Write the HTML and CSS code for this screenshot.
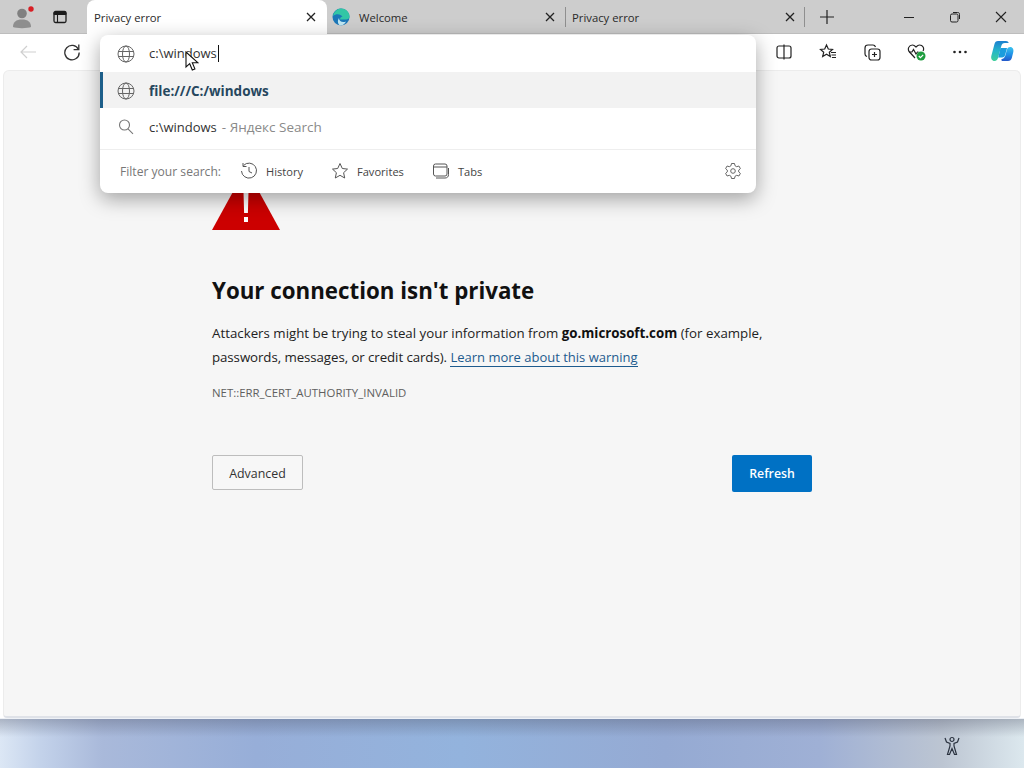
FILE: index.html
```html
<!DOCTYPE html>
<html lang="en">
<head>
    <meta charset="UTF-8">
    <title>Privacy error</title>
    <link rel="stylesheet" href="styles.css">
</head>
<body>
    <div class="browser">
        <!-- Tab strip -->
        <div class="tabstrip">
            <div class="profile">
                <svg width="24" height="24" viewBox="0 0 24 24"><circle cx="12" cy="8.500" r="4.800" fill="#808080"/><path d="M3 22c0-5 3-7.500 9-7.500s9 2.500 9 7.500c-3 1.500-15 1.500-18 0z" fill="#8e8e8e"/><circle cx="21" cy="4" r="2.700" fill="#d81e24"/></svg>
            </div>
            <div class="tab-actions">
                <svg width="16" height="16" viewBox="0 0 16 16" fill="none" stroke="#1c1c1c"><rect x="2" y="2.500" width="12" height="11" rx="1.500" stroke-width="1.300"/><path d="M2 3.500h12v2H2z" fill="#1c1c1c"/><path d="M5.500 5v8" stroke-width="1.100"/></svg>
            </div>
            <div class="tab tab-active">
                <span class="tab-title">Privacy error</span>
                <svg class="tab-close" width="10" height="10" viewBox="0 0 10 10"><path d="M1 1l8 8M9 1l-8 8" stroke="#222" stroke-width="1.300"/></svg>
            </div>
            <div class="tab tab-welcome">
                <svg class="tab-icon" width="18" height="18" viewBox="0 0 18 18"><circle cx="9" cy="9" r="8.500" fill="#1b76b8"/><path d="M1 8c1-5 5-7.500 8-7.500 4.500 0 8.500 3.500 8.500 8 0 2-1.500 3-3.500 3H8c0-1 .5-2.500 2.500-3C9 6 4 5 1 8z" fill="#33c6a5"/><path d="M7 10c0 3.500 3.500 5 7 3.500-1 2-3 4-5.500 4C6 17 5 13 7 10z" fill="#bfe6f2"/></svg>
                <span class="tab-title">Welcome</span>
                <svg class="tab-close" width="10" height="10" viewBox="0 0 10 10"><path d="M1 1l8 8M9 1l-8 8" stroke="#222" stroke-width="1.300"/></svg>
            </div>
            <div class="tab tab-last">
                <span class="tab-title">Privacy error</span>
                <svg class="tab-close" width="10" height="10" viewBox="0 0 10 10"><path d="M1 1l8 8M9 1l-8 8" stroke="#222" stroke-width="1.300"/></svg>
            </div>
            <div class="new-tab">
                <svg width="16" height="16" viewBox="0 0 16 16"><path d="M8 1v14M1 8h14" stroke="#222" stroke-width="1.200"/></svg>
            </div>
            <div class="window-controls">
                <svg width="12" height="12" viewBox="0 0 12 12"><path d="M1 6.500h10" stroke="#222"/></svg>
                <svg width="12" height="12" viewBox="0 0 12 12" fill="none" stroke="#222"><rect x="1.500" y="3" width="7.500" height="8" rx="1.500"/><path d="M4 1.500h4.500c1.500 0 2 .5 2 2V8"/></svg>
                <svg width="12" height="12" viewBox="0 0 12 12"><path d="M1 1l10 10M11 1L1 11" stroke="#222" stroke-width="1.100"/></svg>
            </div>
        </div>

        <!-- Toolbar -->
        <div class="toolbar">
            <div class="nav">
                <svg width="18" height="18" viewBox="0 0 18 18" fill="none" stroke="#cfcfcf" stroke-width="1.200"><path d="M17 9H2M8 3L2 9l6 6"/></svg>
                <svg width="18" height="18" viewBox="0 0 18 18" fill="none" stroke="#333" stroke-width="1.300"><path d="M15.500 6.500A7.200 7.200 0 1 0 16.200 9.500"/><path d="M15.800 1.500v5.200h-5.200"/></svg>
            </div>
            <div class="tools">
                <svg width="18" height="18" viewBox="0 0 18 18" fill="none" stroke="#222" stroke-width="1.200"><rect x="2" y="3" width="14" height="12" rx="2"/><path d="M9 1.500v15"/></svg>
                <svg width="18" height="18" viewBox="0 0 18 18" fill="none" stroke="#222" stroke-width="1.200"><path d="M7.500 2l1.800 4 4.200.4-3.200 2.900 1 4.200-3.800-2.300-3.800 2.300 1-4.200L1.500 6.400l4.200-.4z"/><path d="M12 9.500h5M12.500 12h4.500M13 14.500h4"/></svg>
                <svg width="18" height="18" viewBox="0 0 18 18" fill="none" stroke="#222" stroke-width="1.200"><rect x="6" y="6" width="11" height="11" rx="2.500"/><path d="M11.500 9v5M9 11.500h5M4 13.500C2.500 13 2 12 2 11V5c0-2 1-3 3-3h5c1 0 2 .5 2.500 2"/></svg>
                <svg class="tool-health" width="20" height="18" viewBox="0 0 20 18" fill="none" stroke="#222" stroke-width="1.200"><path d="M8 15L2.500 9C0 6 2 2 5.500 2 7 2 8 3 9 4c1-1 2-2 3.500-2C16 2 17.500 5.500 16 8"/><path d="M2 9h3l1.500-2.500L9 11l1.500-2h1"/><circle cx="14" cy="13" r="4.500" fill="#1f9d3f" stroke="none"/><path d="M11.800 13l1.600 1.600 2.800-2.800" stroke="#fff"/></svg>
                <svg width="18" height="18" viewBox="0 0 18 18" fill="#222"><circle cx="3.500" cy="9" r="1.300"/><circle cx="9" cy="9" r="1.300"/><circle cx="14.500" cy="9" r="1.300"/></svg>
                <svg class="tool-copilot" width="26" height="26" viewBox="0 0 26 26">
                    <defs>
                        <linearGradient id="copilot-left" x1="0" y1="0" x2="0" y2="1"><stop offset="0" stop-color="#1c7fd0"/><stop offset=".5" stop-color="#25b6c9"/><stop offset="1" stop-color="#3fcf9a"/></linearGradient>
                        <linearGradient id="copilot-right" x1="0" y1="0" x2="0" y2="1"><stop offset="0" stop-color="#3cc4ee"/><stop offset=".55" stop-color="#1f8fe6"/><stop offset="1" stop-color="#2457c9"/></linearGradient>
                    </defs>
                    <path d="M9 2h8c1.500 0 2.300.8 2.800 2l-4 0c-2 0-3 1-3.500 3L9 19c-.4 1.500-1.500 3-3.500 3C3 22 1.700 19.500 2.300 17L5.500 5C6 3 7 2 9 2z" fill="url(#copilot-left)"/>
                    <path d="M13 22h6c2 0 3.200-1 3.800-3l1.500-6c.6-2.500-.6-5-3-5-2 0-3 1.200-3.500 3l-1.300 5c-.5 1.800-1.500 3.500-3.500 4-.8.200-1 1-.0 2z" fill="url(#copilot-right)"/>
                    <path d="M11.500 9h6.500l-1.800 7c-.5 1.500-1.500 2.500-3.200 2.500H9.200z" fill="#1b9ddd"/>
                </svg>
            </div>
        </div>

        <!-- Error page -->
        <div class="page">
            <div class="interstitial">
                <svg class="warning" width="68" height="62" viewBox="0 0 68 62"><path d="M34 0l34 62H0z" fill="#cc0000"/><path d="M31.500 24h5l-.6 21h-3.800zM32 49h4v5h-4z" fill="#fff"/></svg>
                <h1>Your connection isn't private</h1>
                <p class="message">Attackers might be trying to steal your information from <strong>go.microsoft.com</strong> (for example, <span class="message-tail">passwords, messages, or credit cards).</span> <a href="#">Learn more about this warning</a></p>
                <p class="error-code">NET::ERR_CERT_AUTHORITY_INVALID</p>
                <div class="buttons">
                    <button class="btn-advanced">Advanced</button>
                    <button class="btn-refresh">Refresh</button>
                </div>
            </div>
        </div>

        <!-- Desktop below the window -->
        <div class="desktop">
            <svg width="18" height="20" viewBox="0 0 18 20" fill="none" stroke="#2b3340" stroke-width="1.200"><circle cx="9" cy="3.500" r="2"/><path d="M2 2l1.500 4L7 7.500V10L4.500 18.500H6.500L9 12.500l2.500 6h2L11 10V7.500L14.500 6 16 2"/></svg>
        </div>
    </div>

    <!-- Address bar dropdown -->
    <div class="omnibox">
        <div class="omni-input">
            <svg class="globe" width="18" height="18" viewBox="0 0 18 18" fill="none" stroke="#666" stroke-width="1"><circle cx="9" cy="9" r="8"/><ellipse cx="9" cy="9" rx="3.500" ry="8"/><path d="M1.500 6.500h15M1.500 11.500h15"/></svg>
            <span class="typed">c:\windows</span>
        </div>
        <div class="omni-row omni-selected">
            <svg class="globe" width="18" height="18" viewBox="0 0 18 18" fill="none" stroke="#666" stroke-width="1"><circle cx="9" cy="9" r="8"/><ellipse cx="9" cy="9" rx="3.500" ry="8"/><path d="M1.500 6.500h15M1.500 11.500h15"/></svg>
            <span class="omni-url">file:///C:/windows</span>
        </div>
        <div class="omni-row">
            <svg class="globe" width="18" height="18" viewBox="0 0 18 18" fill="none" stroke="#777" stroke-width="1.100"><circle cx="7.500" cy="7" r="5"/><path d="M11 10.800l5 5"/></svg>
            <span class="omni-query">c:\windows</span>
            <span class="omni-engine">- Яндекс Search</span>
        </div>
        <div class="omni-filter">
            <span class="filter-label">Filter your search:</span>
            <span class="filter-item">
                <svg width="18" height="18" viewBox="0 0 18 18" fill="none" stroke="#555"><path d="M3.500 3.500A7.500 7.500 0 1 1 1.500 9"/><path d="M3 1v3.500h3.500M9 5v4.500l3 1.500"/></svg>
                History
            </span>
            <span class="filter-item">
                <svg width="18" height="18" viewBox="0 0 18 18" fill="none" stroke="#555"><path d="M9 1.500l2.300 5 5.200.6-3.900 3.600 1.100 5.300L9 13.300 4.300 16l1.100-5.300L1.500 7.100l5.200-.6z"/></svg>
                Favorites
            </span>
            <span class="filter-item">
                <svg width="18" height="18" viewBox="0 0 18 18" fill="none" stroke="#555"><rect x="1.500" y="2" width="13.500" height="12" rx="2"/><path d="M1.500 5h13.500M4 16h9c2 0 3.500-1 3.500-3.500V6"/></svg>
                Tabs
            </span>
            <svg class="filter-gear" width="18" height="18" viewBox="0 0 18 18" fill="none" stroke="#666"><path d="M7.500 1.500h3l.5 2.200 1.700 1 2.200-.7 1.500 2.600-1.700 1.500v1.800l1.700 1.500-1.500 2.600-2.200-.7-1.700 1-.5 2.200h-3l-.5-2.200-1.700-1-2.200.7-1.500-2.600 1.700-1.500V8.100L1.600 6.600 3.100 4l2.200.7 1.700-1z"/><circle cx="9" cy="9" r="2.300"/></svg>
        </div>
    </div>

    <!-- Mouse pointer -->
    <svg class="pointer" width="14" height="21" viewBox="0 0 14 21"><path d="M1 1v15l3.700-3.300 2.600 6.300 2.600-1.100-2.600-6.100H13z" fill="#fff" stroke="#111" stroke-width="1.100"/></svg>
</body>
</html>
```

FILE: styles.css
```css
/* General Page Styles */
html, body {
    margin: 0;
    padding: 0;
    height: 768px;
    overflow: hidden;
}

body {
    font-family: 'Open Sans', 'Noto Sans', sans-serif;
    color: #1b1b1b;
    background-color: #fff;
}

.browser {
    display: flex;
    flex-direction: column;
    height: 768px;
}

/* Tab strip */
.tabstrip {
    display: flex;
    align-items: stretch;
    height: 33px;
    background-color: #cdcdcd;
    border-bottom: 1px solid #bdbdbd;
    font-size: 11.300px;
}

.profile {
    width: 44px;
    display: flex;
    align-items: center;
    justify-content: center;
    box-sizing: border-box;
}

.tab-actions {
    width: 43px;
    display: flex;
    align-items: center;
    justify-content: center;
    box-sizing: border-box;
    padding-right: 12px;
}

.tab {
    display: flex;
    align-items: center;
    box-sizing: border-box;
    height: 33px;
    padding: 0 10px 0 7px;
}

.tab-title {
    flex: 1;
    color: #2a2a2a;
}

.tab-active {
    width: 240px;
    background-color: #fff;
    height: 34px;
    border-radius: 8px 8px 0 0;
    padding-right: 11px;
}

.tab-welcome {
    width: 239px;
    padding-left: 5px;
    border-right: 1px solid #8f8f8f;
    height: 20px;
    margin-top: 7px;
}

.tab-icon {
    margin-right: 9px;
}

.tab-last {
    width: 239px;
    height: 20px;
    margin-top: 7px;
    padding-left: 6px;
    padding-right: 9px;
    border-right: 1px solid #8f8f8f;
}

.new-tab {
    width: 44px;
    display: flex;
    align-items: center;
    justify-content: center;
}

.window-controls {
    flex: 1;
    display: flex;
    align-items: center;
    justify-content: space-between;
    padding: 0 17px 0 54px;
}

/* Toolbar */
.toolbar {
    display: flex;
    align-items: center;
    justify-content: space-between;
    height: 36px;
    background-color: #fff;
    flex-shrink: 0;
}

.nav {
    display: flex;
    align-items: center;
    gap: 26px;
    padding-left: 19px;
}

.tools {
    display: flex;
    align-items: center;
    gap: 26px;
    padding-right: 9px;
}

.tool-health {
    margin-right: -2px;
}

.tool-copilot {
    margin-left: -6px;
}

/* Error page */
.page {
    flex: 1;
    margin: 0 3px;
    background-color: #f6f6f6;
    border: 1px solid #ececec;
    border-bottom: 2px solid #dfe2e8;
    border-radius: 6px 6px 4px 4px;
    box-sizing: border-box;
}

.interstitial {
    width: 600px;
    margin-left: 208px;
    padding-top: 97px;
}

.warning {
    display: block;
}

h1 {
    margin: 45px 0 0;
    font-size: 22.300px;
    line-height: 32px;
    font-weight: 700;
    color: #111;
}

.message {
    margin: 14px 0 0;
    font-size: 13.300px;
    line-height: 24px;
    color: #222;
}

.message strong {
    font-weight: 700;
    color: #111;
}

.message-tail {
    letter-spacing: -0.08px;
}

.message a {
    font-size: 13px;
    color: #1d5b8e;
    text-decoration: none;
    border-bottom: 1px solid #1d5b8e;
}

.error-code {
    margin: 16px 0 0;
    font-size: 11.400px;
    line-height: 16px;
    color: #5f5f5f;
}

.buttons {
    display: flex;
    justify-content: space-between;
    align-items: flex-start;
    margin-top: 54px;
}

button {
    font-family: inherit;
    cursor: pointer;
}

.btn-advanced {
    width: 91px;
    height: 35px;
    padding-top: 2px;
    font-size: 12.400px;
    background-color: #f7f7f7;
    color: #333;
    border: 1px solid #bdbdbd;
    border-radius: 2px;
}

.btn-refresh {
    width: 80px;
    height: 37px;
    font-size: 12.300px;
    background-color: #0071c4;
    color: #fff;
    font-weight: 600;
    border: none;
    border-radius: 2px;
}

/* Desktop below the window */
.desktop {
    height: 50px;
    flex-shrink: 0;
    display: flex;
    align-items: center;
    justify-content: flex-end;
    padding: 4px 63px 0 0;
    box-sizing: border-box;
    border-top: 1px solid #eef1f6;
    background:
        linear-gradient(180deg, rgba(80, 85, 105, 0.35), rgba(80, 85, 105, 0) 18px),
        linear-gradient(90deg, #dce7f5 0, #c3d2ea 4%, #a9b9da 10%, #97aed8 25%, #93b3dd 45%, #95aad3 65%, #9fb0d5 80%, #bcc5d2 92%, #dce8ee 100%);
}

/* Address bar dropdown */
.omnibox {
    position: absolute;
    left: 100px;
    top: 35px;
    width: 656px;
    height: 158px;
    background-color: #fff;
    border-radius: 8px;
    box-shadow: 0 6px 20px rgba(0, 0, 0, 0.35);
    font-size: 13px;
}

.omni-input, .omni-row {
    display: flex;
    align-items: center;
    padding-left: 17px;
    box-sizing: border-box;
}

.omni-input {
    height: 37px;
}

.omni-row {
    height: 37px;
}

.globe {
    flex-shrink: 0;
    margin-right: 14px;
}

.typed {
    color: #333;
    border-right: 1px solid #111;
    padding-right: 1px;
    line-height: 17px;
}

.omni-selected {
    height: 36px;
    padding-top: 1px;
    background-color: #f2f2f2;
    border-left: 3px solid #1d5f8a;
    padding-left: 14px;
}

.omni-url {
    font-size: 13.500px;
    font-weight: 700;
    color: #26475e;
}

.omni-query {
    color: #333;
    margin-right: 5px;
}

.omni-engine {
    font-size: 13.500px;
    color: #8a8a8a;
}

.omni-filter {
    display: flex;
    align-items: center;
    height: 43px;
    margin-top: 4px;
    padding: 0 14px 0 20px;
    border-top: 1px solid #eee;
    font-size: 11.100px;
    box-sizing: border-box;
    color: #444;
}

.filter-label {
    color: #777;
    font-size: 12.100px;
    margin-right: 19px;
}

.filter-item {
    display: flex;
    align-items: center;
    gap: 8px;
    margin-right: 28px;
}

.filter-gear {
    margin-left: auto;
}

/* Mouse pointer */
.pointer {
    position: absolute;
    left: 185px;
    top: 51px;
}
```
